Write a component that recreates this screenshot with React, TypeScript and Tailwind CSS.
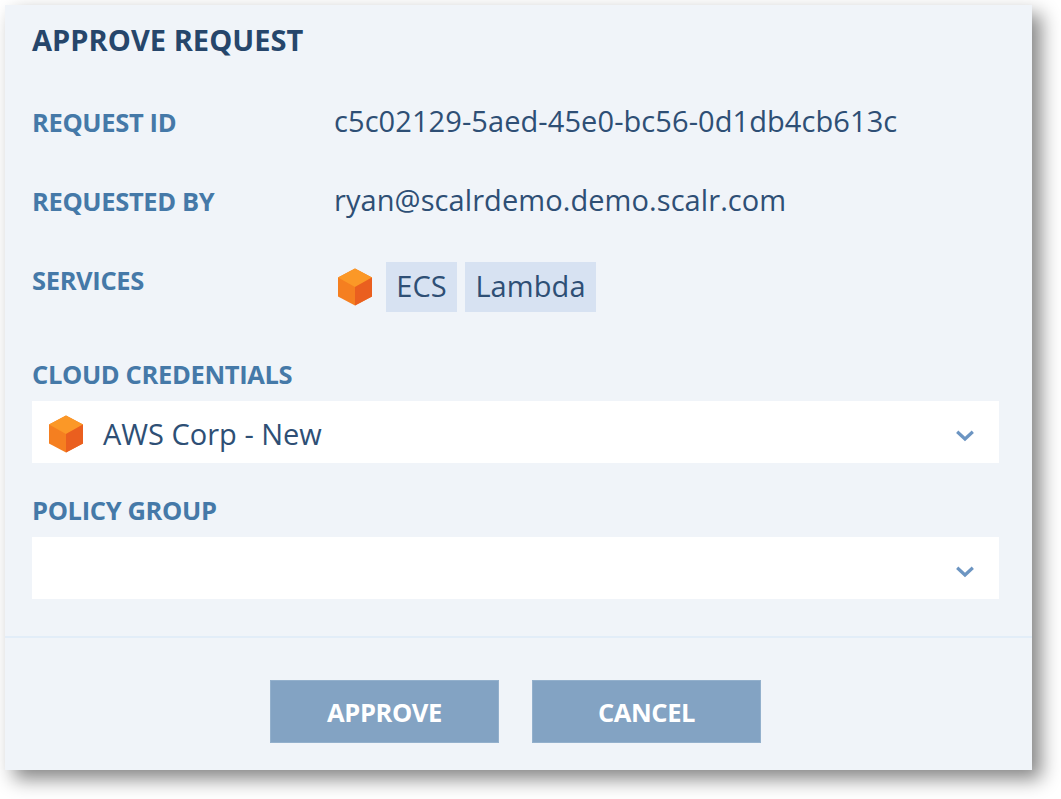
import type { ReactNode } from "react";

function Cube() {
  return (
    <svg className="block h-[38px] w-[34px] shrink-0" viewBox="0 0 34 38">
      <path d="M17 0.5 34 9.5V28.5L17 37.5 0 28.5V9.5Z" fill="#f57f20" />
      <path d="M17 0.5 34 9.5 17 19 0 9.5Z" fill="#fb9827" />
      <path d="M34 9.5V28.5L17 37.5V19Z" fill="#ea5f1f" />
    </svg>
  );
}

function Chevron() {
  return (
    <svg className="block h-3 w-[18px] shrink-0" viewBox="0 0 18 12" fill="none">
      <path d="M1.2 1.8 9 9 16.8 1.8" stroke="#6c95c2" strokeWidth="3.2" />
    </svg>
  );
}

function Label({ children }: { children: ReactNode }) {
  return (
    <span className="block text-[25.5px] leading-10 font-bold tracking-[-0.35px] whitespace-nowrap text-[#4579a8]">
      {children}
    </span>
  );
}

function Row({ label, children }: { label: ReactNode; children: ReactNode }) {
  return (
    <div className="flex h-10">
      <div className="w-[302px] shrink-0">
        <Label>{label}</Label>
      </div>
      {children}
    </div>
  );
}

function Value({ children }: { children: ReactNode }) {
  return (
    <span className="text-[29px] leading-[38px] tracking-[0.08px] whitespace-nowrap">
      {children}
    </span>
  );
}

function Select({ children }: { children?: ReactNode }) {
  return (
    <div className="flex h-[62px] w-[967px] items-center bg-white pt-1 pr-[25px] pl-[17px]">
      <div className="flex grow items-center">{children}</div>
      <div className="pt-[3px]">
        <Chevron />
      </div>
    </div>
  );
}

function Chip({ children }: { children: ReactNode }) {
  return (
    <span className="flex h-[50px] items-center justify-center bg-[#d7e2f2] pb-0.5 text-[29px] tracking-[0.08px] whitespace-nowrap">
      {children}
    </span>
  );
}

function Button({ children }: { children: ReactNode }) {
  return (
    <button className="h-[63px] w-[229px] border border-[#93b0cc] bg-[#83a3c3] pt-px text-[25.5px] leading-10 font-bold tracking-[-0.4px] text-white">
      {children}
    </button>
  );
}

export default function App() {
  return (
    <div className="h-[799px] w-[1061px] overflow-hidden bg-white pt-[5px] pl-[5px] font-['Open_Sans',sans-serif] text-[#2e4f75]">
      <main className="flex h-[765px] w-[1027px] flex-col bg-[#f0f4f9] shadow-[9px_9px_18px_rgba(0,0,0,0.48)]">
        <section className="h-[631px] pt-[15px] pl-[27px]">
          <h1 className="text-[29px] leading-10 font-bold tracking-[0.05px] whitespace-nowrap text-[#26466b]">
            APPROVE REQUEST
          </h1>
          <div className="flex flex-col gap-[39px] pt-[42px]">
            <Row label="REQUEST ID">
              <Value>c5c02129-5aed-45e0-bc56-0d1db4cb613c</Value>
            </Row>
            <Row label="REQUESTED BY">
              <Value>ryan@scalrdemo.demo.scalr.com</Value>
            </Row>
            <Row label="SERVICES">
              <div className="flex items-start pt-0.5 pl-1">
                <div className="flex h-[50px] items-center">
                  <Cube />
                  <div className="ml-[14px] grid grid-cols-[71px_131px] gap-2">
                    <Chip>ECS</Chip>
                    <Chip>Lambda</Chip>
                  </div>
                </div>
              </div>
            </Row>
          </div>
          <div className="pt-[54px]">
            <Label>CLOUD CREDENTIALS</Label>
          </div>
          <div className="pt-[7px]">
            <Select>
              <Cube />
              <span className="ml-5 text-[29px] leading-10 whitespace-nowrap">
                AWS Corp - New
              </span>
            </Select>
          </div>
          <div className="pt-[27px]">
            <Label>POLICY GROUP</Label>
          </div>
          <div className="pt-[7px]">
            <Select />
          </div>
        </section>
        <footer className="flex grow justify-center gap-[33px] border-t-2 border-[#e2edf8] pt-[42px] pr-[6px]">
          <Button>APPROVE</Button>
          <Button>CANCEL</Button>
        </footer>
      </main>
    </div>
  );
}
